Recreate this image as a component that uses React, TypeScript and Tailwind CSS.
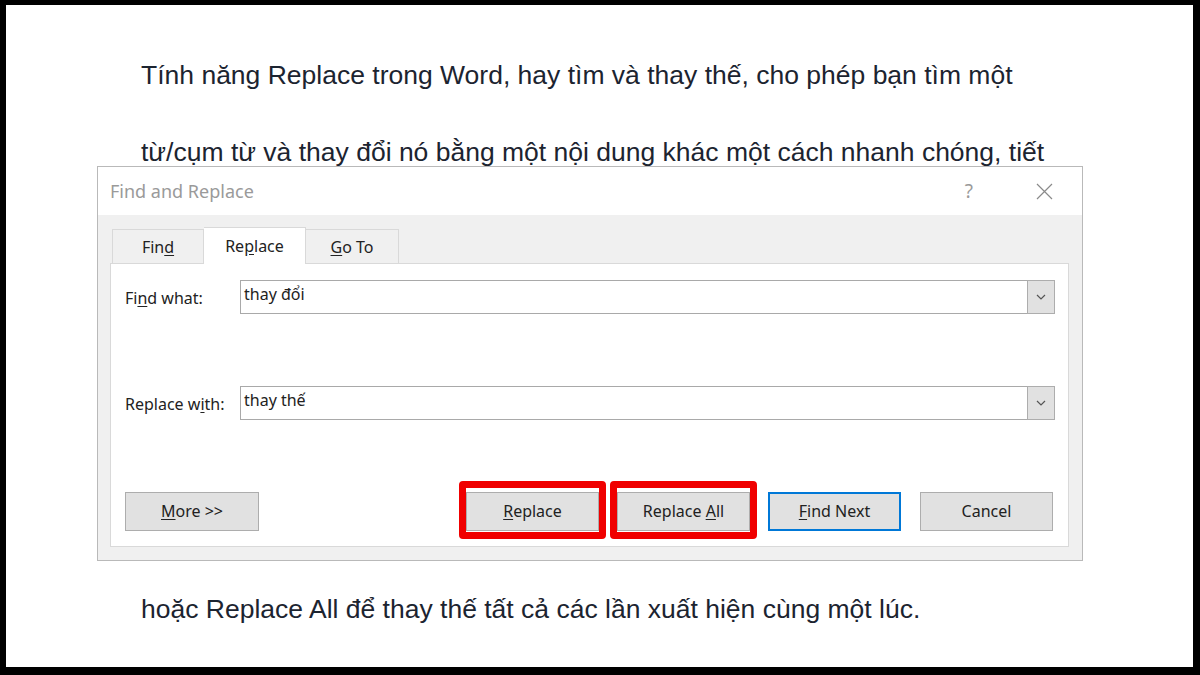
import React from 'react';

const ui = { fontFamily: '"Noto Sans", "Open Sans", sans-serif' };
const doc = { fontFamily: '"Liberation Sans", Arial, sans-serif' };

const Chevron = () => (
  <svg width="10" height="6" viewBox="0 0 10 6" fill="none">
    <path d="M1 1 L5 5 L9 1" stroke="#555" strokeWidth="1.2" />
  </svg>
);

const ComboInput = ({ value }: { value: string }) => (
  <div className="flex h-[34px] w-[815px] border border-[#a9a9a9] bg-white">
    <div className="flex-1 pl-[3px] pt-[3px] text-[16px] leading-[20px] text-[#222]">{value}</div>
    <div className="flex w-[28px] items-center justify-center border-l border-[#adadad] bg-[#e1e1e1] -my-px -mr-px border-y border-r">
      <Chevron />
    </div>
  </div>
);

const Btn = ({ children, primary }: { children: React.ReactNode; primary?: boolean }) => (
  <div
    className={
      'flex h-[39px] w-[133px] items-center justify-center bg-[#e1e1e1] text-[16px] text-[#222] ' +
      (primary ? 'border-2 border-[#0078d7]' : 'border border-[#adadad]')
    }
  >
    {children}
  </div>
);

const RedBox = ({ children }: { children: React.ReactNode }) => (
  <div className="flex h-[58px] w-[147px] items-center justify-center rounded-[4px] border-[7px] border-[#f00000]">
    {children}
  </div>
);

export default function App() {
  return (
    <div className="h-[675px] w-[1200px] overflow-hidden border-b-[8px] border-l-[6px] border-r-[7px] border-t-[5px] border-black bg-white">
      <div className="h-[161px] pl-[135px] pt-[32px] text-[26.5px] leading-[77px] text-[#1c2430]" style={doc}>
        <div className="whitespace-nowrap">Tính năng Replace trong Word, hay tìm và thay thế, cho phép bạn tìm một</div>
        <div className="whitespace-nowrap">từ/cụm từ và thay đổi nó bằng một nội dung khác một cách nhanh chóng, tiết</div>
      </div>

      <div className="relative ml-[91px] h-[395px] w-[986px] border border-[#b9b9b9] bg-[#f0f0f0]" style={ui}>
        <div className="flex h-[48px] items-center bg-white pl-[12px]">
          <span className="text-[18px] text-[#9a9a9a]">Find and Replace</span>
          <span className="ml-auto mr-[63px] text-[19px] text-[#9a9a9a]">?</span>
          <svg className="mr-[29px]" width="17" height="17" viewBox="0 0 17 17">
            <path d="M1 1 L16 16 M16 1 L1 16" stroke="#8a8a8a" strokeWidth="1.2" />
          </svg>
        </div>

        <div className="pl-[12px] pr-[13px] pt-[12px]">
          <div className="relative z-10 -mb-px flex h-[37px] items-end pl-[2px] text-[16px] text-[#222]">
            <div className="mb-px flex h-[34px] w-[92px] items-center justify-center border border-b-0 border-[#d9d9d9] bg-[#f0f0f0]">
              <span>
                Fin<span className="underline underline-offset-2">d</span>
              </span>
            </div>
            <div className="flex h-[37px] w-[102px] items-center justify-center border border-b-0 border-l-0 border-[#d9d9d9] bg-white">
              <span>
                Re<span className="underline underline-offset-2">p</span>lace
              </span>
            </div>
            <div className="mb-px flex h-[34px] w-[93px] items-center justify-center border border-b-0 border-l-0 border-[#d9d9d9] bg-[#f0f0f0]">
              <span>
                <span className="underline underline-offset-2">G</span>o To
              </span>
            </div>
          </div>

          <div className="h-[284px] border border-[#d9d9d9] bg-white pl-[14px] pt-[16px] text-[16px] text-[#222]">
            <div className="flex h-[34px] items-center">
              <div className="w-[115px] pt-px">
                Fi<span className="underline underline-offset-2">n</span>d what:
              </div>
              <ComboInput value="thay đổi" />
            </div>
            <div className="mt-[72px] flex h-[34px] items-center">
              <div className="w-[115px] pt-px">
                Replace w<span className="underline underline-offset-2">i</span>th:
              </div>
              <ComboInput value="thay thế" />
            </div>
            <div className="mt-[61px] flex h-[58px] items-center">
              <div className="mt-[2px] flex h-[39px] w-[134px] items-center justify-center border border-[#adadad] bg-[#e1e1e1] text-[16px]">
                <span>
                  <span className="underline underline-offset-2">M</span>ore &gt;&gt;
                </span>
              </div>
              <div className="ml-[200px]">
                <RedBox>
                  <div className="mt-[2px]">
                    <Btn>
                      <span>
                        <span className="underline underline-offset-2">R</span>eplace
                      </span>
                    </Btn>
                  </div>
                </RedBox>
              </div>
              <div className="ml-[4px]">
                <RedBox>
                  <div className="mt-[2px]">
                    <Btn>
                      <span>
                        Replace <span className="underline underline-offset-2">A</span>ll
                      </span>
                    </Btn>
                  </div>
                </RedBox>
              </div>
              <div className="ml-[11px] mt-[2px]">
                <Btn primary>
                  <span>
                    <span className="underline underline-offset-2">F</span>ind Next
                  </span>
                </Btn>
              </div>
              <div className="ml-[19px] mt-[2px]">
                <Btn>Cancel</Btn>
              </div>
            </div>
          </div>
        </div>
      </div>

      <div className="pl-[135px] pt-[10px] text-[26.5px] leading-[77px] text-[#1c2430]" style={doc}>
        <div className="whitespace-nowrap">hoặc Replace All để thay thế tất cả các lần xuất hiện cùng một lúc.</div>
      </div>
    </div>
  );
}
